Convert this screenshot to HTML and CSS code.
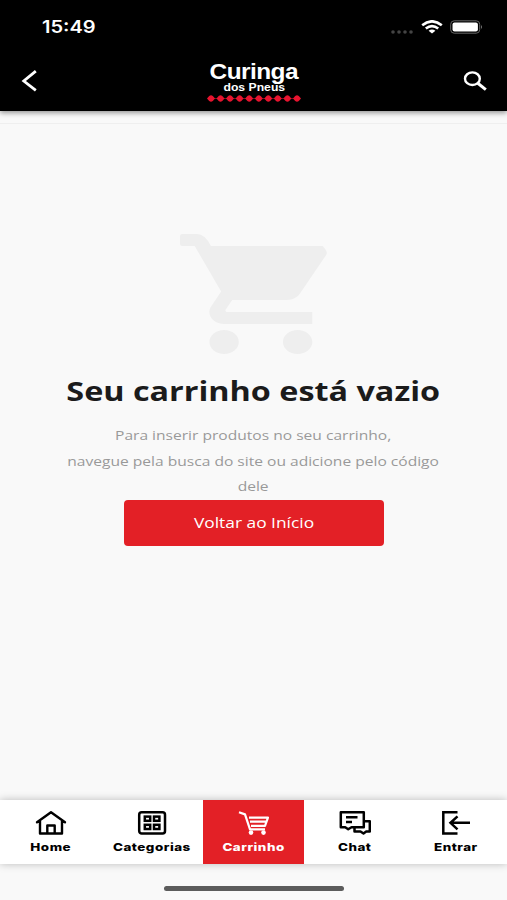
FILE: index.html
```html
<!DOCTYPE html>
<html lang="pt-BR">
<head>
  <meta charset="UTF-8" />
  <meta name="viewport" content="width=device-width, initial-scale=1" />
  <title>Curinga dos Pneus</title>
  <link rel="stylesheet" href="styles.css">
</head>
<body>

  <header class="header">
    <div class="status-bar">
      <span class="clock wide">15:49</span>
      <div class="status-icons">
        <svg class="signal" width="24" height="6" viewBox="0 0 24 6" fill="#444">
          <circle cx="3" cy="3" r="1.8" /><circle cx="9" cy="3" r="1.8" /><circle cx="15" cy="3" r="1.8" /><circle cx="21" cy="3" r="1.8" />
        </svg>
        <svg class="wifi" width="22" height="14" viewBox="0 0 22 14" fill="none" stroke="#fff" stroke-width="2.6">
          <path d="M1.2 5.2Q11 -2.6 20.8 5.2" />
          <path d="M4.8 8.6Q11 3.6 17.2 8.6" />
          <path d="M7.6 10.8Q11 8 14.4 10.8L11 13.6z" fill="#fff" stroke="none" />
        </svg>
        <svg class="battery" width="33" height="14" viewBox="0 0 33 14">
          <rect x=".7" y=".8" width="29" height="12.4" rx="3.5" fill="none" stroke="#666" stroke-width="1" />
          <rect x="2.5" y="2.4" width="25.4" height="9.2" rx="2" fill="#fff" />
          <path d="M31 5q2 2 0 4z" fill="#777" />
        </svg>
      </div>
    </div>
    <div class="toolbar">
      <svg class="back" width="16" height="22" viewBox="0 0 16 22" fill="none" stroke="#fff" stroke-width="2.8">
        <path d="M14.8 1.2L2.8 11l12 9.3" />
      </svg>
      <div class="logo">
        <span class="logo-name wide">Curinga</span>
        <span class="logo-sub wide">dos Pneus</span>
        <svg class="logo-diamonds" width="94" height="7" viewBox="0 0 94 7">
          <path d="M2 3.5h90" stroke="#7d0c1c" stroke-width="1" />
          <g fill="#e8142f">
            <path id="d" d="M0 3.5L2.2 1Q4 -.6 5.8 1L8 3.5 5.8 6Q4 7.6 2.2 6z" />
            <use href="#d" x="9.5" /><use href="#d" x="19" /><use href="#d" x="28.6" />
            <use href="#d" x="38.2" /><use href="#d" x="47.8" /><use href="#d" x="57.3" />
            <use href="#d" x="66.8" /><use href="#d" x="76.4" /><use href="#d" x="86" />
          </g>
        </svg>
      </div>
      <svg class="search" width="24" height="20" viewBox="0 0 24 20" fill="none" stroke="#fff">
        <ellipse cx="9.4" cy="7.7" rx="7.4" ry="6.3" stroke-width="2.4" />
        <path d="M14.5 12l8.3 6.6" stroke-width="3" />
      </svg>
    </div>
  </header>

  <main class="empty-cart">
    <svg class="cart-icon" width="147" height="120" viewBox="1 2 20 20" preserveAspectRatio="none" fill="#eee">
      <path d="M7 18c-1.1 0-1.99.9-1.99 2S5.9 22 7 22s2-.9 2-2-.9-2-2-2zM1.3 2Q1 2 1 2.3V3.7Q1 4 1.3 4H3l3.6 7.59-1.35 2.45c-.16.28-.25.61-.25.96 0 1.1.9 2 2 2h12v-2H7.42c-.14 0-.25-.11-.25-.25l.03-.12.9-1.63h7.45c.75 0 1.41-.41 1.75-1.03l3.58-6.49Q21.2 5 20.4 4H5.21Q4.4 2 3.3 2zM17 18c-1.1 0-1.99.9-1.99 2s.89 2 1.99 2 2-.9 2-2-.9-2-2-2z" />
    </svg>
    <h1 class="wide">Seu carrinho está vazio</h1>
    <p class="wide">Para inserir produtos no seu carrinho,<br>navegue pela busca do site ou adicione pelo código<br>dele</p>
    <button class="home-btn"><span class="wide">Voltar ao Início</span></button>
  </main>

  <nav class="tab-bar">
    <a class="tab">
      <svg width="32" height="26" viewBox="0 0 32 26" fill="none" stroke="#000" stroke-width="2.4" stroke-linejoin="round" stroke-linecap="round">
        <path d="M2 12.2L16 2.2l14 10M5 11v12.5h22V11M12.3 23.5v-8h7.4v8" />
      </svg>
      <span class="wide">Home</span>
    </a>
    <a class="tab">
      <svg width="32" height="26" viewBox="0 0 32 26" fill="none" stroke="#000" stroke-width="2.5">
        <rect x="3.2" y="2.2" width="25.8" height="21.3" rx="2.5" />
        <rect x="8.8" y="6.6" width="5.4" height="4.2" /><rect x="18" y="6.6" width="5.4" height="4.2" />
        <rect x="8.8" y="14.8" width="5.4" height="4.2" /><rect x="18" y="14.8" width="5.4" height="4.2" />
      </svg>
      <span class="wide">Categorias</span>
    </a>
    <a class="tab active">
      <svg width="32" height="26" viewBox="0 0 32 26" fill="none" stroke="#fff" stroke-width="2.2" stroke-linejoin="round">
        <path d="M2 2.2l6 2.2 5 15h15M12 7.6h19l-3 8.2H14M13 11.7h16" />
        <circle cx="14" cy="22.6" r="2.3" fill="#fff" stroke="none" /><circle cx="26.5" cy="22.6" r="2.3" fill="#fff" stroke="none" />
      </svg>
      <span class="wide">Carrinho</span>
    </a>
    <a class="tab">
      <svg width="32" height="26" viewBox="0 0 32 26" fill="none" stroke="#000" stroke-width="2.5" stroke-linejoin="round">
        <path d="M1.8 2.2h23v15H12.5l-3.3 2-3-2H1.8zM7 7.2h11.5M7 12h6" />
        <path d="M25 11.2h5.8v10.3h-3.6l-2.7 2-3-2h-6v-4.3" />
      </svg>
      <span class="wide">Chat</span>
    </a>
    <a class="tab">
      <svg width="32" height="26" viewBox="0 0 32 26" fill="none" stroke="#000" stroke-width="2.5">
        <path d="M17.5 2.3H3.3v21.2h14.2M30 12.8H11M17.5 6.3l-7 6.5 7 6.5" />
      </svg>
      <span class="wide">Entrar</span>
    </a>
  </nav>
  <div class="home-indicator"></div>

</body>
</html>
```

FILE: styles.css
```css
:root {
  --color-accent: #e32026;
  --color-bg: #f9f9f9;
  --color-text: #1b1b1b;
  --color-muted: #999;
}

* {
  box-sizing: border-box;
}

body {
  margin: 0;
  height: 900px;
  font-family: 'Open Sans', sans-serif;
  background: var(--color-bg);
  color: var(--color-text);
  display: flex;
  flex-direction: column;
  overflow: hidden;
}

/* extended lettering */
.wide {
  display: block;
  white-space: nowrap;
  transform: scaleX(1.22);
}

.header {
  height: 111px;
  background: #000;
  color: #fff;
  box-shadow: 0 2px 5px rgba(0, 0, 0, 0.4);
}

.status-bar {
  height: 54px;
  padding: 0 24px 0 42px;
  display: flex;
  align-items: center;
  justify-content: space-between;
}

.clock {
  font-family: Inter, sans-serif;
  font-size: 17px;
  font-weight: 600;
  transform: scaleX(1.18);
  transform-origin: left;
}

.status-icons {
  display: flex;
  align-items: center;
  gap: 7px;
}

.signal {
  margin-top: 9px;
}

.toolbar {
  height: 57px;
  padding: 0 20px 0 21px;
  display: grid;
  grid-template-columns: 1fr auto 1fr;
}

.back {
  margin-top: 16px;
}

.search {
  margin-top: 17px;
  justify-self: end;
}

.logo {
  display: flex;
  flex-direction: column;
  align-items: center;
  margin-top: 8px;
}

.logo-name {
  font-family: 'Liberation Sans', sans-serif;
  font-size: 22px;
  line-height: 20px;
  font-weight: 700;
  letter-spacing: -0.5px;
  transform: scaleX(1.11);
}

.logo-sub {
  font-family: 'Liberation Sans', sans-serif;
  font-size: 10px;
  line-height: 12px;
  font-weight: 700;
}

.logo-diamonds {
  margin-top: 1px;
}

.empty-cart {
  flex: 1;
  margin-top: 12px;
  padding-top: 110px;
  border-top: 1px solid #efefef;
  display: flex;
  flex-direction: column;
  align-items: center;
  text-align: center;
}

.empty-cart h1 {
  margin: 19px 0 0;
  font-size: 26px;
  line-height: 36px;
  font-weight: 700;
  transform: scaleX(1.244);
}

.empty-cart p {
  margin: 14px 0 0;
  font-size: 13px;
  line-height: 25.5px;
  color: var(--color-muted);
  transform: scaleX(1.198);
}

.home-btn {
  width: 260px;
  height: 46px;
  border: 0;
  border-radius: 4px;
  background: var(--color-accent);
  color: #fff;
  font-family: inherit;
  font-size: 14px;
}

.home-btn .wide {
  transform: scaleX(1.24);
}

.tab-bar {
  height: 64px;
  display: grid;
  grid-template-columns: repeat(5, 1fr);
  background: #fff;
  box-shadow: 0 0 8px rgba(0, 0, 0, 0.25);
}

.tab {
  padding-top: 10px;
  display: flex;
  flex-direction: column;
  align-items: center;
  color: #000;
  font-family: Inter, sans-serif;
  font-size: 11px;
  line-height: 15px;
  font-weight: 800;
  letter-spacing: 0.4px;
}

.tab span {
  margin-top: 4px;
}

.tab.active {
  background: var(--color-accent);
  color: #fff;
}

.home-indicator {
  width: 180px;
  height: 5px;
  margin: 22px auto 9px;
  border-radius: 3px;
  background: #5c5c5c;
}
```
